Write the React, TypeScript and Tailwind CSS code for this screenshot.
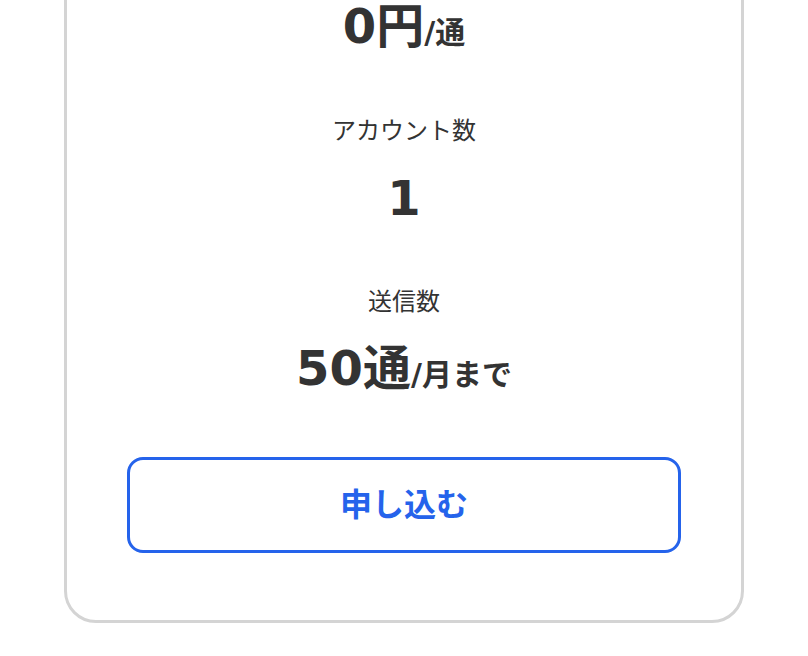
export default function App() {
  const font = { fontFamily: '"DejaVu Sans", "Noto Sans CJK JP", sans-serif' };
  return (
    <div className="min-h-screen bg-white px-16 text-[#333333]" style={font}>
      <div className="-mt-[40px] rounded-[32px] border-[3px] border-[#d4d4d4] bg-white px-[60px] pt-[39px] pb-[67px]">
        <div className="flex items-baseline justify-center font-bold leading-[48px]">
          <span className="text-[48px]">0円</span>
          <span className="text-[30px]">/通</span>
        </div>

        <div className="mt-[56px] text-center text-[24px] leading-[36px]">アカウント数</div>
        <div className="mt-[17px] flex items-baseline justify-center font-bold leading-[64px]">
          <span className="text-[48px]">1</span>
        </div>

        <div className="mt-[54px] text-center text-[24px] leading-[36px]">送信数</div>
        <div className="mt-[16px] flex items-baseline justify-center font-bold leading-[64px]">
          <span className="text-[48px]">50通</span>
          <span className="text-[30px]">/月まで</span>
        </div>

        <button
          type="button"
          className="mt-[50px] flex h-[96px] w-full items-center justify-center rounded-2xl border-[3px] border-[#2563eb] bg-white text-[32px] font-bold text-[#2563eb]"
        >
          申し込む
        </button>
      </div>
    </div>
  );
}
